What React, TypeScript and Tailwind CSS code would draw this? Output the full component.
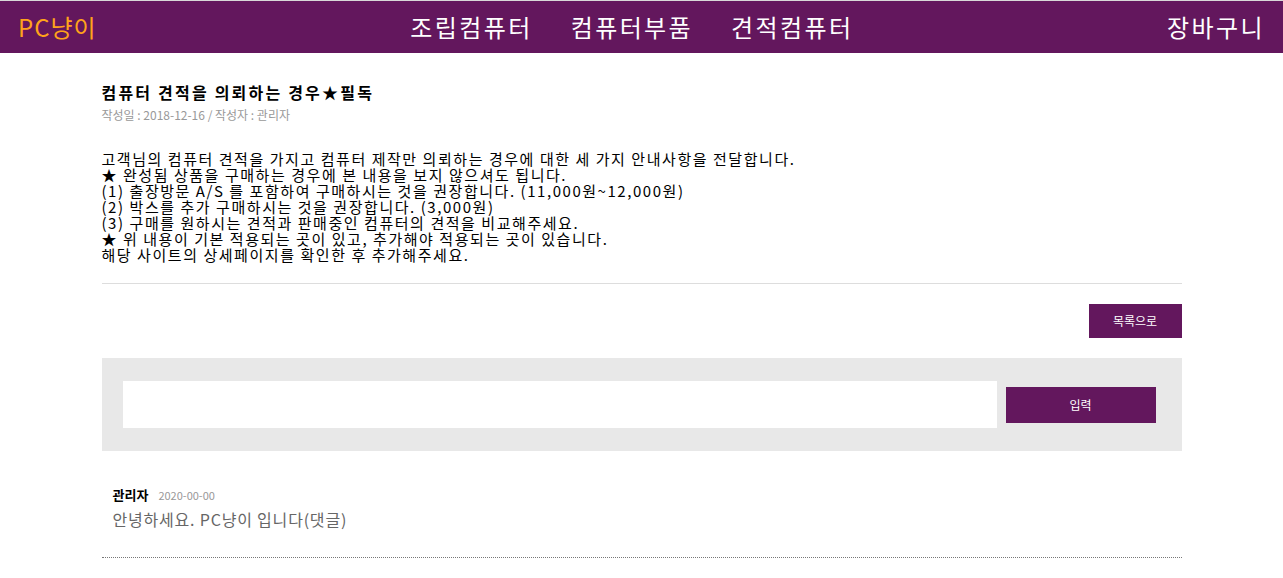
import React from "react";

const lines = [
  "고객님의 컴퓨터 견적을 가지고 컴퓨터 제작만 의뢰하는 경우에 대한 세 가지 안내사항을 전달합니다.",
  "★ 완성됨 상품을 구매하는 경우에 본 내용을 보지 않으셔도 됩니다.",
  "(1) 출장방문 A/S 를 포함하여 구매하시는 것을 권장합니다. (11,000원~12,000원)",
  "(2) 박스를 추가 구매하시는 것을 권장합니다. (3,000원)",
  "(3) 구매를 원하시는 견적과 판매중인 컴퓨터의 견적을 비교해주세요.",
  "★ 위 내용이 기본 적용되는 곳이 있고, 추가해야 적용되는 곳이 있습니다.",
  "해당 사이트의 상세페이지를 확인한 후 추가해주세요.",
];

export default function App() {
  return (
    <div className="min-h-screen bg-white font-['Noto_Sans_CJK_KR',sans-serif]">
      {/* Header */}
      <header className="h-[53px] bg-[#63175d] flex items-center justify-between pl-[18px] pr-[18px] border-t border-[#d8d8d8]">
        <div className="text-[24px] leading-none text-[#ffa31a] tracking-[1px]">PC냥이</div>
        <nav className="flex gap-[38px] text-[24px] leading-none text-white tracking-[2.4px]">
          <span>조립컴퓨터</span>
          <span>컴퓨터부품</span>
          <span>견적컴퓨터</span>
        </nav>
        <div className="text-[24px] leading-none text-white tracking-[2.4px]">장바구니</div>
      </header>

      <main className="max-w-[1080px] mx-auto pt-[29px]">
        {/* Post */}
        <h1 className="text-[16px] leading-[20px] font-bold text-black tracking-[2.2px]">
          컴퓨터 견적을 의뢰하는 경우★필독
        </h1>
        <p className="mt-[6px] text-[12px] leading-[14px] text-[#999]">
          작성일 : 2018-12-16 / 작성자 : 관리자
        </p>

        <div className="mt-[29px] text-[15px] leading-[16px] text-black tracking-[1.55px]">
          {lines.map((l, i) => (
            <p key={i}>{l}</p>
          ))}
        </div>

        <div className="mt-[20px] border-b border-[#dddddd]" />

        <div className="flex justify-end mt-[20px]">
          <button className="w-[93px] h-[34px] bg-[#63175d] text-white text-[12px]">
            목록으로
          </button>
        </div>

        {/* Comment form */}
        <div className="mt-[20px] bg-[#e8e8e8] h-[93px] flex items-center pl-[21px]">
          <input className="w-[874px] h-[47px] bg-white outline-none px-3" />
          <button className="ml-[9px] w-[150px] h-[36px] bg-[#63175d] text-white text-[12px]">
            입력
          </button>
        </div>

        {/* Comments */}
        <div className="mt-[34px] px-[11px] pb-[26px] border-b border-dotted border-[#777]">
          <div className="flex items-baseline gap-[10px]">
            <span className="text-[13px] font-bold text-black">관리자</span>
            <span className="text-[11px] text-[#999]">2020-00-00</span>
          </div>
          <p className="mt-[2px] text-[16px] text-[#666] tracking-[0.8px]">
            안녕하세요. PC냥이 입니다(댓글)
          </p>
        </div>
      </main>
    </div>
  );
}
